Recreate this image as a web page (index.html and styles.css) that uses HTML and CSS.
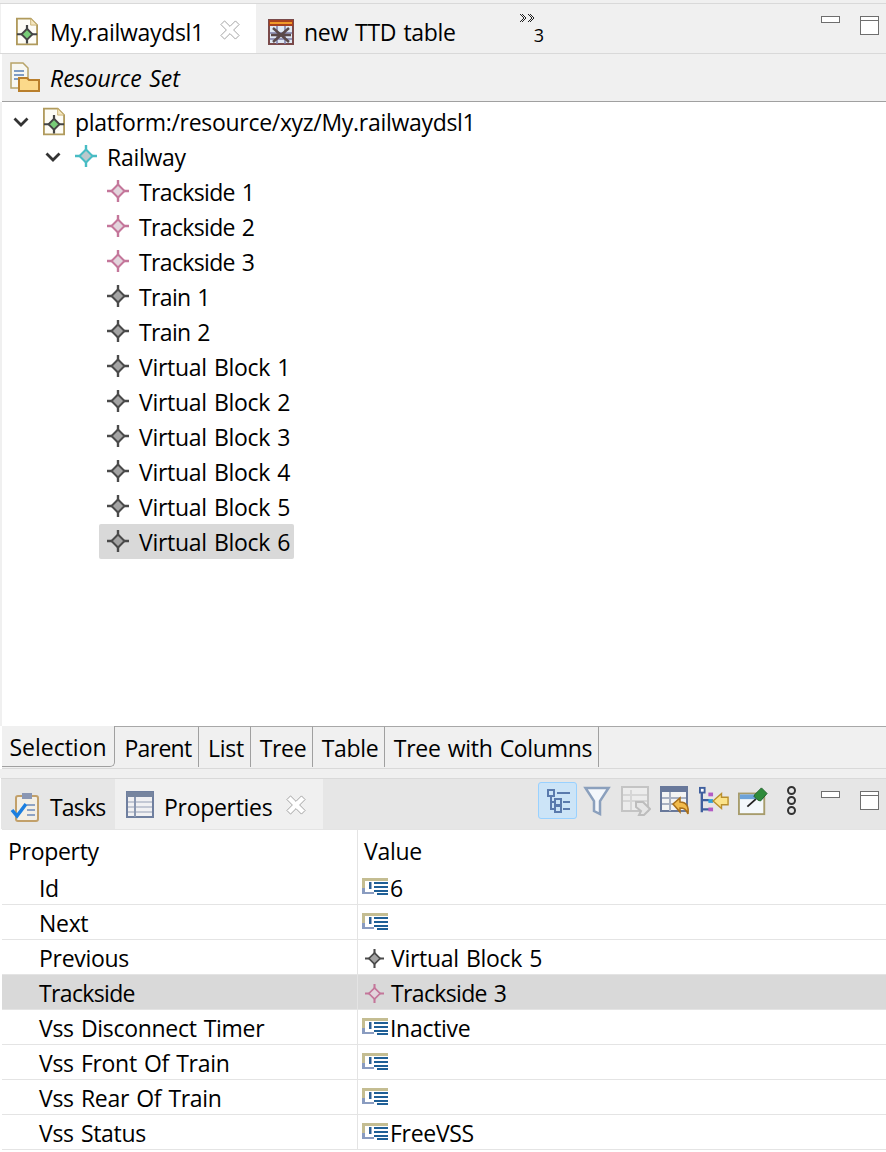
FILE: index.html
```html
<!DOCTYPE html>
<html lang="en">
<head>
  <meta charset="UTF-8">
  <title>Railway DSL editor</title>
  <link rel="stylesheet" href="styles.css">
</head>
<body>
  <svg class="defs" width="0" height="0">
    <defs>
      <symbol id="node" viewBox="0 0 22 22">
        <path d="M11 0v22M0 11h22" stroke="currentColor" stroke-width="2.400" fill="none"/>
        <path d="M11 4.500l6.500 6.500-6.500 6.500-6.500-6.500z" fill="var(--core)" stroke="currentColor" stroke-width="2"/>
      </symbol>
      <symbol id="doc" viewBox="0 0 24 30">
        <path d="M1 1h15l7 7v21H1z" fill="#fdfcf6" stroke="#b09a5c" stroke-width="2"/>
        <path d="M16 1v7h7z" fill="#f4e7c0" stroke="#c8b070"/>
        <path d="M12 8v20M1 18h22" stroke="#444" stroke-width="2.400"/>
        <path d="M12 12l6 6-6 6-6-6z" fill="#78cc78" stroke="#444" stroke-width="2"/>
      </symbol>
      <symbol id="close" viewBox="0 0 22 22">
        <path d="M5 1l6 6 6-6 4 4-6 6 6 6-4 4-6-6-6 6-4-4 6-6-6-6z" fill="#fff" stroke="#9a9a9a"/>
      </symbol>
      <symbol id="attr" viewBox="0 0 26 17" preserveAspectRatio="none">
        <path d="M0 0h26v3H3v9H0z" fill="#c4bd92"/>
        <path d="M0 10h3v4h9v2H0z" fill="#8a9cc0"/>
        <path d="M7 4h2.500v7H7z" fill="#2c5f94"/>
        <path d="M12 4h14v2H12zM12 8h14v2H12zM12 12h14v2H12zM15 15h11v2H15z" fill="#1f5f96"/>
      </symbol>
    </defs>
  </svg>

  <section class="editor">
    <div class="tabbar">
      <div class="tab tab-active">
        <svg class="ico-doc"><use href="#doc"/></svg>
        <span>My.railwaydsl1</span>
        <svg class="ico-close"><use href="#close"/></svg>
      </div>
      <div class="tab tab-ttd">
        <svg class="ico-table" viewBox="0 0 26 26">
          <rect x="1" y="1" width="24" height="24" fill="#dfe9f4" stroke="#7a4a4a" stroke-width="2"/>
          <rect x="1" y="1" width="24" height="6" fill="#a8401f"/>
          <rect x="2" y="3" width="22" height="2" fill="#f09a2a"/>
          <path d="M2 14h22M2 20h22M9 7v18M17 7v18" stroke="#7d7da8" stroke-width="1.500"/>
          <path d="M5 9l16 14M21 9L5 23M3 16h20" stroke="#5a4a4a" stroke-width="2.500"/>
        </svg>
        <span>new TTD table</span>
      </div>
      <div class="more">
        <svg class="chev" viewBox="0 0 17 10"><path d="M1 1l4 4-4 4M3 1l4 4-4 4M9 1l4 4-4 4M11 1l4 4-4 4" fill="none" stroke="#222"/></svg>
        <span class="more-num">3</span>
      </div>
      <div class="winbtns">
        <span class="btn-min"></span>
        <span class="btn-max"></span>
      </div>
    </div>

    <div class="crumb">
      <svg class="ico-res" viewBox="0 0 30 30">
        <path d="M1 1h12l5 5v20H1z" fill="#f7f7f2" stroke="#b8a468" stroke-width="1.500"/>
        <path d="M4 9h10M4 13h10M4 17h5" stroke="#7e9cc4" stroke-width="2"/>
        <path d="M9 16h8l2 2h10v11H9z" fill="#fbd98a" stroke="#b97f2c" stroke-width="2"/>
      </svg>
      <span>Resource Set</span>
    </div>

    <div class="tree">
      <div class="row lvl0">
        <svg class="twisty" viewBox="0 0 16 10"><path d="M1.500 1.500L8 8l6.500-6.500" fill="none" stroke="#333" stroke-width="2.800"/></svg>
        <svg class="ico-doc"><use href="#doc"/></svg>
        <span>platform:/resource/xyz/My.railwaydsl1</span>
      </div>
      <div class="row lvl1">
        <svg class="twisty" viewBox="0 0 16 10"><path d="M1.500 1.500L8 8l6.500-6.500" fill="none" stroke="#333" stroke-width="2.800"/></svg>
        <svg class="node teal"><use href="#node"/></svg>
        <span>Railway</span>
      </div>
      <div class="row lvl2"><svg class="node pink"><use href="#node"/></svg><span class="tight">Trackside 1</span></div>
      <div class="row lvl2"><svg class="node pink"><use href="#node"/></svg><span class="tight">Trackside 2</span></div>
      <div class="row lvl2"><svg class="node pink"><use href="#node"/></svg><span class="tight">Trackside 3</span></div>
      <div class="row lvl2"><svg class="node grey"><use href="#node"/></svg><span class="tight">Train 1</span></div>
      <div class="row lvl2"><svg class="node grey"><use href="#node"/></svg><span class="tight">Train 2</span></div>
      <div class="row lvl2"><svg class="node grey"><use href="#node"/></svg><span>Virtual Block 1</span></div>
      <div class="row lvl2"><svg class="node grey"><use href="#node"/></svg><span>Virtual Block 2</span></div>
      <div class="row lvl2"><svg class="node grey"><use href="#node"/></svg><span>Virtual Block 3</span></div>
      <div class="row lvl2"><svg class="node grey"><use href="#node"/></svg><span>Virtual Block 4</span></div>
      <div class="row lvl2"><svg class="node grey"><use href="#node"/></svg><span>Virtual Block 5</span></div>
      <div class="row lvl2 row-sel"><svg class="node grey"><use href="#node"/></svg><span>Virtual Block 6</span></div>
    </div>

    <div class="pagetabs">
      <div class="ptab ptab-sel">Selection</div>
      <div class="ptab ptab-parent">Parent</div>
      <div class="ptab ptab-list">List</div>
      <div class="ptab ptab-tree">Tree</div>
      <div class="ptab ptab-table">Table</div>
      <div class="ptab ptab-cols">Tree with Columns</div>
      <div class="ptab-rest"></div>
    </div>
  </section>

  <section class="props">
    <div class="viewbar">
      <div class="vtab vtab-tasks">
        <svg class="ico-tasks" viewBox="0 0 30 30">
          <rect x="6" y="4" width="22" height="25" rx="2" fill="#f3efe6" stroke="#c2a06a" stroke-width="2"/>
          <path d="M12 1h10v6H12z" fill="#8a97b4"/>
          <path d="M17 13h8M17 18h8M17 23h8" stroke="#8ea3c4" stroke-width="2"/>
          <path d="M2 18l5 6 9-12" fill="none" stroke="#1c7fe0" stroke-width="3.500"/>
        </svg>
        <span>Tasks</span>
      </div>
      <div class="vtab vtab-active">
        <svg class="ico-props" viewBox="0 0 28 28">
          <rect x="1" y="1" width="26" height="25" fill="#f1f1f3" stroke="#6f7f9f" stroke-width="2"/>
          <rect x="1" y="1" width="26" height="5" fill="#77859f"/>
          <path d="M2 11h24M2 16h24M2 21h24" stroke="#c3c8d4" stroke-width="2"/>
          <path d="M9 6v20" stroke="#8a97b0" stroke-width="2"/>
        </svg>
        <span>Properties</span>
        <svg class="ico-close"><use href="#close"/></svg>
      </div>
      <div class="tools">
        <span class="tool tool-on">
          <svg viewBox="0 0 24 24"><path d="M2 1h6v6H2zM9 10h6v6H9zM9 17h6v6H9z" fill="none" stroke="#5a7aac" stroke-width="2"/><path d="M5 7v13h4M5 13h4M11 4h13M17 13h7M17 20h7" fill="none" stroke="#5a7aac" stroke-width="2"/></svg>
        </span>
        <span class="tool">
          <svg viewBox="0 0 26 30"><path d="M1.500 2h23L16 15v13l-6-3V15z" fill="#f4f7fb" stroke="#8ba0bd" stroke-width="2.500"/></svg>
        </span>
        <span class="tool">
          <svg viewBox="0 0 30 30"><rect x="1" y="1" width="26" height="24" fill="#ececec" stroke="#c4c4c4" stroke-width="2"/><path d="M2 9h24M2 15h24M10 4v20" stroke="#d6d6d6" stroke-width="2"/><path d="M15 16h7l7 7-6 6h-5l2-4-5-4z" fill="#e6e6e6" stroke="#bdbdbd" stroke-width="2"/></svg>
        </span>
        <span class="tool">
          <svg viewBox="0 0 30 30"><rect x="1" y="1" width="26" height="24" fill="#f4f4f4" stroke="#68789a" stroke-width="2"/><rect x="1" y="1" width="26" height="5" fill="#68789a"/><path d="M10 6v19M2 12h24M2 18h24" stroke="#a9b1c2" stroke-width="2"/><path d="M13 18l7-6v4c6 0 9 4 8 12-2-5-4-6-8-6v4z" fill="#f2bb4c" stroke="#a96f1a" stroke-width="1.500"/></svg>
        </span>
        <span class="tool">
          <svg viewBox="0 0 32 30"><path d="M3 6v21M3 14h8M3 24h8" fill="none" stroke="#3f5f9e" stroke-width="2.500"/><rect x="1" y="1" width="5" height="5" fill="#fff" stroke="#3f5f9e" stroke-width="2"/><rect x="10" y="6" width="5" height="4" fill="#b35bc4"/><rect x="10" y="13" width="5" height="4" fill="#2f9fd8"/><rect x="10" y="22" width="5" height="4" fill="#b35bc4"/><path d="M15 15l9-8v4h7v8h-7v4z" fill="#fbe38a" stroke="#b98f2c" stroke-width="1.500"/></svg>
        </span>
        <span class="tool">
          <svg viewBox="0 0 32 30"><rect x="1" y="7" width="27" height="22" fill="#f4f8fb" stroke="#a79c6c" stroke-width="2"/><rect x="2" y="8" width="25" height="5" fill="#6ea3d8"/><path d="M10 21l9-8" stroke="#222" stroke-width="2"/><path d="M18 8l7-7 6 6-7 8-3-1-4-4z" fill="#2e8b3a" stroke="#1c5e26"/></svg>
        </span>
        <span class="dots"><i></i><i></i><i></i></span>
      </div>
      <div class="winbtns">
        <span class="btn-min"></span>
        <span class="btn-max"></span>
      </div>
    </div>

    <div class="grid">
      <div class="grow ghead"><div class="gname">Property</div><div class="gval">Value</div></div>
      <div class="grow"><div class="gname">Id</div><div class="gval"><svg class="ico-attr"><use href="#attr"/></svg><span>6</span></div></div>
      <div class="grow"><div class="gname">Next</div><div class="gval"><svg class="ico-attr"><use href="#attr"/></svg></div></div>
      <div class="grow"><div class="gname">Previous</div><div class="gval"><svg class="node-sm grey"><use href="#node"/></svg><span>Virtual Block 5</span></div></div>
      <div class="grow grow-sel"><div class="gname"><span class="tight">Trackside</span></div><div class="gval"><svg class="node-sm pink"><use href="#node"/></svg><span class="tight">Trackside 3</span></div></div>
      <div class="grow"><div class="gname">Vss Disconnect Timer</div><div class="gval"><svg class="ico-attr"><use href="#attr"/></svg><span>Inactive</span></div></div>
      <div class="grow"><div class="gname">Vss Front Of Train</div><div class="gval"><svg class="ico-attr"><use href="#attr"/></svg></div></div>
      <div class="grow"><div class="gname">Vss Rear Of Train</div><div class="gval"><svg class="ico-attr"><use href="#attr"/></svg></div></div>
      <div class="grow"><div class="gname">Vss Status</div><div class="gval"><svg class="ico-attr"><use href="#attr"/></svg><span>FreeVSS</span></div></div>
    </div>
  </section>
</body>
</html>
```

FILE: styles.css
```css
html, body {
  margin: 0;
  padding: 0;
}

body {
  position: relative;
  width: 886px;
  height: 1152px;
  overflow: hidden;
  background: #fff;
  color: #000;
  font-family: "Open Sans", "Noto Sans", sans-serif;
  font-size: 23px;
  letter-spacing: -0.3px;
  word-spacing: 1.5px;
}

.defs {
  display: block;
  height: 0;
}

svg {
  flex: none;
  display: block;
}

.tight {
  letter-spacing: -0.65px;
}

/* editor area */
.editor {
  display: flex;
  flex-direction: column;
  height: 769px;
  border-top: 3px solid #f0f0f0;
  box-sizing: border-box;
}

.tabbar {
  display: flex;
  align-items: stretch;
  height: 49px;
  padding-left: 1px;
  background: #f0f0f0;
  border-top: 1px solid #d9d9d9;
  border-bottom: 1px solid #d9d9d9;
}

.tab {
  display: flex;
  align-items: center;
  padding-top: 6px;
  box-sizing: border-box;
}

.tab-active {
  width: 255px;
  padding-left: 15px;
  background: #fff;
}

.tab-active span {
  margin-left: 12px;
}

.tab-ttd {
  padding-left: 12px;
}

.tab-ttd span {
  margin-left: 10px;
}

.ico-doc {
  width: 22px;
  height: 29px;
}

.ico-close {
  width: 20px;
  height: 20px;
  margin-left: 16px;
  margin-top: -4px;
}

.ico-table {
  width: 26px;
  height: 26px;
}

.more {
  display: flex;
  flex-direction: column;
  width: 40px;
  margin-left: 63px;
  line-height: 1;
}

.chev {
  width: 17px;
  height: 10px;
  margin-top: 9px;
}

.more-num {
  font-size: 18px;
  margin-left: 15px;
  margin-top: 3px;
}

.winbtns {
  display: flex;
  gap: 20px;
  margin-left: auto;
  padding: 12px 7px 0 0;
}

.btn-min {
  width: 17px;
  height: 5px;
  background: #fff;
  border: 1px solid #6e6e6e;
}

.btn-max {
  width: 17px;
  height: 17px;
  background: linear-gradient(#6e6e6e, #6e6e6e) 0 3px / 100% 1px no-repeat #fff;
  border: 1px solid #6e6e6e;
}

.crumb {
  display: flex;
  align-items: center;
  height: 47px;
  margin-left: 2px;
  padding-left: 8px;
  background: #f0f0f0;
  border-bottom: 1px solid #a0a0a0;
  font-style: italic;
  letter-spacing: 0;
}

.ico-res {
  width: 30px;
  height: 30px;
  margin-top: -2px;
}

.crumb span {
  margin-left: 10px;
}

.tree {
  flex: 1;
  padding-top: 2px;
  border-left: 2px solid #f0f0f0;
}

.row {
  display: flex;
  align-items: center;
  width: max-content;
  height: 35px;
}

.lvl0 {
  margin-left: 11px;
}

.lvl1 {
  margin-left: 43px;
}

.lvl2 {
  margin-left: 97px;
  padding: 0 4px 0 8px;
}

.twisty {
  width: 16px;
  height: 10px;
  margin-right: 14px;
}

.lvl0 span,
.lvl1 span,
.lvl2 span {
  margin-left: 10px;
}

.node {
  width: 22px;
  height: 22px;
  margin-top: -2px;
}

.teal {
  color: #48bcc4;
  --core: #bcc8cc;
}

.pink {
  color: #c4769a;
  --core: #e2d4dc;
}

.grey {
  color: #4a4a4a;
  --core: #a4a4a4;
}

.row-sel {
  background: #d9d9d9;
  border-radius: 2px;
}

.pagetabs {
  display: flex;
  align-items: flex-start;
  height: 43px;
  margin-left: 2px;
  background: #f0f0f0;
  border-bottom: 1px solid #d9d9d9;
  box-sizing: border-box;
}

.ptab {
  display: flex;
  align-items: center;
  justify-content: center;
  flex: none;
  height: 41px;
  padding: 1px 0 0 3px;
  box-sizing: border-box;
  border-top: 1px solid #a8a8a8;
  border-right: 1px solid #a0a0a0;
}

.ptab-sel {
  width: 113px;
  height: 41px;
  padding-left: 0;
  letter-spacing: 0;
  border-top: 0;
  border-bottom: 1px solid #a0a0a0;
  border-bottom-right-radius: 5px;
}

.ptab-parent {
  width: 84px;
  letter-spacing: -0.7px;
}

.ptab-list {
  width: 52px;
}

.ptab-tree {
  width: 62px;
}

.ptab-table {
  width: 72px;
}

.ptab-cols {
  width: 214px;
}

.ptab-rest {
  flex: 1;
  border-top: 1px solid #a8a8a8;
}

/* properties view */
.props {
  border-top: 9px solid #f0f0f0;
}

.viewbar {
  display: flex;
  align-items: stretch;
  height: 50px;
  margin-left: 1px;
  background: #e6e6e6;
  border-top: 1px solid #d9d9d9;
}

.vtab {
  display: flex;
  align-items: center;
  padding-top: 5px;
  box-sizing: border-box;
}

.vtab-tasks {
  width: 114px;
  padding-left: 9px;
  letter-spacing: -0.8px;
}

.vtab-tasks span {
  margin-left: 10px;
}

.vtab-active {
  width: 208px;
  padding-left: 11px;
  background: #f0f0f0;
}

.vtab-active span {
  margin-left: 10px;
}

.ico-tasks {
  width: 30px;
  height: 30px;
}

.ico-props {
  width: 28px;
  height: 28px;
  margin-top: -3px;
}

.vtab-active .ico-close {
  margin-left: 14px;
}

/* toolbar sits over the tab strip, right of the tabs */
.tools {
  position: absolute;
  left: 538px;
  top: 782px;
  display: flex;
  align-items: center;
  height: 37px;
}

.tool {
  display: flex;
  align-items: center;
  justify-content: center;
  width: 39px;
  height: 37px;
  box-sizing: border-box;
}

.tool svg {
  width: 30px;
  height: 30px;
}

.tool-on {
  background: #cce4f7;
  border: 1px solid #99d1ff;
  border-radius: 3px;
}

.tool-on svg {
  width: 24px;
  height: 24px;
}

.dots {
  display: flex;
  flex-direction: column;
  gap: 1px;
  margin-left: 15px;
}

.dots i {
  display: block;
  width: 5px;
  height: 5px;
  border: 2px solid #333;
  border-radius: 50%;
}

.grid {
  margin-left: 2px;
  border-top: 1px solid #e4e4e4;
}

.grow {
  display: flex;
  height: 35px;
  box-sizing: border-box;
  border-bottom: 1px solid #e4e4e4;
}

.ghead {
  height: 40px;
  border-bottom: none;
}

.gname {
  display: flex;
  align-items: center;
  width: 356px;
  padding: 2px 0 0 37px;
  box-sizing: border-box;
  border-right: 1px solid #e4e4e4;
}

.ghead .gname {
  padding-left: 6px;
}

.gval {
  display: flex;
  align-items: center;
  padding: 2px 0 0 4px;
}

.ghead .gval {
  padding-left: 6px;
}

.grow-sel {
  background: #d9d9d9;
}

.ico-attr {
  width: 26px;
  height: 17px;
  margin-top: -3px;
  margin-right: 2px;
}

.node-sm {
  width: 19px;
  height: 19px;
  margin: 0 7px 0 3px;
}
```
